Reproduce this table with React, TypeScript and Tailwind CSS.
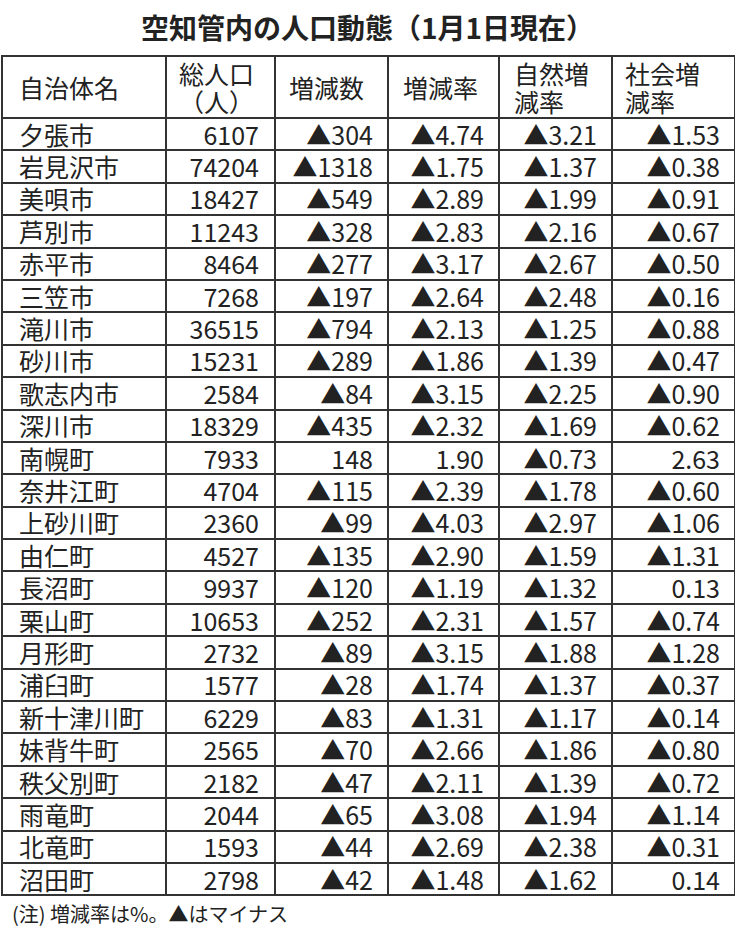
const rows: [string, string, string, string, string, string][] = [
  ['夕張市', '6107', '▲304', '▲4.74', '▲3.21', '▲1.53'],
  ['岩見沢市', '74204', '▲1318', '▲1.75', '▲1.37', '▲0.38'],
  ['美唄市', '18427', '▲549', '▲2.89', '▲1.99', '▲0.91'],
  ['芦別市', '11243', '▲328', '▲2.83', '▲2.16', '▲0.67'],
  ['赤平市', '8464', '▲277', '▲3.17', '▲2.67', '▲0.50'],
  ['三笠市', '7268', '▲197', '▲2.64', '▲2.48', '▲0.16'],
  ['滝川市', '36515', '▲794', '▲2.13', '▲1.25', '▲0.88'],
  ['砂川市', '15231', '▲289', '▲1.86', '▲1.39', '▲0.47'],
  ['歌志内市', '2584', '▲84', '▲3.15', '▲2.25', '▲0.90'],
  ['深川市', '18329', '▲435', '▲2.32', '▲1.69', '▲0.62'],
  ['南幌町', '7933', '148', '1.90', '▲0.73', '2.63'],
  ['奈井江町', '4704', '▲115', '▲2.39', '▲1.78', '▲0.60'],
  ['上砂川町', '2360', '▲99', '▲4.03', '▲2.97', '▲1.06'],
  ['由仁町', '4527', '▲135', '▲2.90', '▲1.59', '▲1.31'],
  ['長沼町', '9937', '▲120', '▲1.19', '▲1.32', '0.13'],
  ['栗山町', '10653', '▲252', '▲2.31', '▲1.57', '▲0.74'],
  ['月形町', '2732', '▲89', '▲3.15', '▲1.88', '▲1.28'],
  ['浦臼町', '1577', '▲28', '▲1.74', '▲1.37', '▲0.37'],
  ['新十津川町', '6229', '▲83', '▲1.31', '▲1.17', '▲0.14'],
  ['妹背牛町', '2565', '▲70', '▲2.66', '▲1.86', '▲0.80'],
  ['秩父別町', '2182', '▲47', '▲2.11', '▲1.39', '▲0.72'],
  ['雨竜町', '2044', '▲65', '▲3.08', '▲1.94', '▲1.14'],
  ['北竜町', '1593', '▲44', '▲2.69', '▲2.38', '▲0.31'],
  ['沼田町', '2798', '▲42', '▲1.48', '▲1.62', '0.14'],
];

const cell = 'border-2 border-[#333] h-[32.4px] p-0 leading-none';

export default function App() {
  return (
    <div
      className="w-[735px] h-[938px] bg-white text-[#222]"
      style={{ fontFamily: '"Noto Sans CJK JP", "Noto Sans", sans-serif' }}
    >
      {/* Title */}
      <div className="h-[55px] flex items-center justify-center pb-[2px]">
        <h1 className="text-[28px] font-bold leading-none">空知管内の人口動態（1月1日現在）</h1>
      </div>

      {/* Table */}
      <div className="pl-[1px]">
        <table className="border-collapse w-[733px] table-fixed text-[25px]">
          <colgroup>
            <col className="w-[164px]" />
            <col className="w-[109px]" />
            <col className="w-[113px]" />
            <col className="w-[111px]" />
            <col className="w-[113px]" />
            <col className="w-[123px]" />
          </colgroup>
          <thead>
            <tr className="h-[62px]">
              <th className="border-2 border-[#333] font-normal text-left pl-[16px] pt-[2px]">自治体名</th>
              <th className="border-2 border-[#333] font-normal text-left pl-[12px] leading-[28px]">
                総人口
                <br />
                （人）
              </th>
              <th className="border-2 border-[#333] font-normal text-left pl-[13px] pt-[2px]">増減数</th>
              <th className="border-2 border-[#333] font-normal text-left pl-[14px] pt-[2px]">増減率</th>
              <th className="border-2 border-[#333] font-normal text-left pl-[14px] leading-[28px]">
                自然増
                <br />
                減率
              </th>
              <th className="border-2 border-[#333] font-normal text-left pl-[12px] leading-[28px]">
                社会増
                <br />
                減率
              </th>
            </tr>
          </thead>
          <tbody>
            {rows.map((r) => (
              <tr key={r[0]}>
                <td className={`${cell} pl-[16px] text-left`}>{r[0]}</td>
                <td className={`${cell} pr-[15px] text-right`}>{r[1]}</td>
                <td className={`${cell} pr-[14px] text-right`}>{r[2]}</td>
                <td className={`${cell} pr-[14px] text-right`}>{r[3]}</td>
                <td className={`${cell} pr-[14px] text-right`}>{r[4]}</td>
                <td className={`${cell} pr-[14px] text-right`}>{r[5]}</td>
              </tr>
            ))}
          </tbody>
        </table>
      </div>

      {/* Note */}
      <p className="pl-[12px] pt-[8px] text-[20px] leading-none">(注) 増減率は%。▲はマイナス</p>
    </div>
  );
}
